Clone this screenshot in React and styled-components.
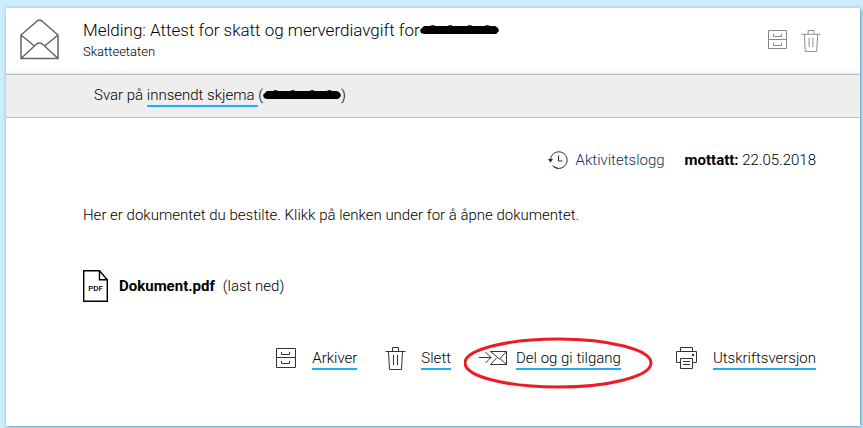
import React from "react";
import styled, { createGlobalStyle } from "styled-components";

const GlobalStyle = createGlobalStyle`
  *, *::before, *::after { box-sizing: border-box; }
  body {
    margin: 0;
    background: #cceeff;
    color: #000;
    font-family: Roboto, "Liberation Sans", sans-serif;
    font-size: 15px;
    font-weight: 300;
    line-height: 20px;
  }
  strong { font-weight: 700; }
`;

const Page = styled.main`
  padding: 8px 3px 2px 6px;
`;

const Card = styled.article`
  background: #fff;
  box-shadow: 1px 1px 4px rgba(0, 70, 100, 0.55);
`;

const Header = styled.header`
  display: flex;
  align-items: flex-start;
  height: 66px;
  padding: 11px 39px 0 14px;
  background: linear-gradient(#fff 62px, #eee 66px);
`;

const Titles = styled.div`
  flex: 1;
  margin-left: 24px;
`;

const Title = styled.h1`
  display: flex;
  align-items: center;
  margin: 0;
  font-size: 17px;
  line-height: 22px;
  font-weight: 300;
`;

const Sender = styled.p`
  margin: 2px 0 0;
  font-size: 13px;
  line-height: 18px;
`;

const HeaderTools = styled.div`
  display: flex;
  gap: 13px;
  padding-top: 10px;
`;

const IconButton = styled.button`
  display: flex;
  padding: 0;
  border: 0;
  background: none;
  color: #888;
  cursor: pointer;
`;

const Reference = styled.div`
  display: flex;
  align-items: center;
  height: 44px;
  padding: 0 88px 2px;
  border: solid #b0bec5;
  border-width: 1px 0;
  background: #eee;
`;

const TextLink = styled.a`
  margin-top: 2px;
  border-bottom: 2px solid #1eaef7;
  color: #000;
  line-height: 20px;
  text-decoration: none;
  white-space: pre;
`;

const Body = styled.div`
  padding: 32px 44px 56px 77px;
`;

const MetaRow = styled.div`
  display: flex;
  justify-content: flex-end;
  align-items: center;
  gap: 20px;
`;

const LogLink = styled.a`
  display: flex;
  align-items: center;
  gap: 8px;
  color: #0f2f50;
  text-decoration: none;
`;

const Message = styled.p`
  margin: 35px 0 0;
`;

const Download = styled.a`
  display: flex;
  align-items: center;
  gap: 8px;
  width: fit-content;
  margin-top: 45px;
  color: #000;
  text-decoration: none;
`;

const FileName = styled.strong`
  margin-left: 3px;
`;

const Actions = styled.nav`
  display: flex;
  justify-content: flex-end;
  align-items: center;
  gap: 28px;
  margin-top: 44px;
`;

const Action = styled.span`
  position: relative;
  display: flex;
  align-items: center;
  gap: ${(p) => (p.$marked ? "9px" : "15px")};
  margin-right: ${(p) => (p.$marked ? "27px" : "0")};
  color: #333;
`;

const Marker = styled.svg`
  position: absolute;
  left: -15px;
  top: -9px;
  pointer-events: none;
`;

const Icon = styled.svg`
  flex: none;
  fill: none;
  stroke: currentColor;
  stroke-width: ${(p) => p.$weight || 1};
`;

const Cabinet = ({ size = 22 }) => (
  <Icon width={size} height={size} viewBox={`0 0 ${size} ${size}`} aria-hidden="true">
    <path d={`M1.5 1.500h${size - 3}v${size - 3}h-${size - 3}zM1.500 10.500h${size - 3}`} />
    <path d="M6.500 5v2.500h8V5M6.500 14v2.500h8V14" />
  </Icon>
);

const Trash = ({ size = 24 }) => (
  <Icon width={size - 3} height={size} viewBox="0 0 21 24" aria-hidden="true">
    <path d="M.5 5.500h20M7.500 5V1.500h6V5M3.500 5.500l1 18h12l1-18M8.500 9v10M12.500 9v10" />
  </Icon>
);

const OpenEnvelope = () => (
  <Icon $weight={1.5} width="39" height="41" viewBox="0 0 39 41" color="#666" aria-hidden="true">
    <path d="M1 16v23.500h37V16L23 3q-3.500-4-7 0zM1 16l14 11.500M38 16L24 27.500M1 39.500L15.500 26q4-4 8 0L38 39.500" />
  </Icon>
);

const History = () => (
  <Icon width="20" height="20" viewBox="0 0 20 20" aria-hidden="true">
    <path d="M2.500 10a8.300 8.300 0 1 1 2 5.500M6 16.500q2 1.700 4 1.900M10.500 5.500v5.500h4" />
    <path d="M0 9h5l-2.500 3.500z" fill="currentColor" stroke="none" />
  </Icon>
);

const PdfFile = () => (
  <Icon $weight={1.4} width="25" height="32" viewBox="0 0 25 32" aria-hidden="true">
    <path d="M.7.7h15.800l7.800 9v21.600H.7zM16.500.7v9h7.800" />
    <text x="12.500" y="21" textAnchor="middle" fontSize="8" fontWeight="500" fill="currentColor" stroke="none">
      PDF
    </text>
  </Icon>
);

const Send = () => (
  <Icon width="28" height="16" viewBox="0 0 28 16" aria-hidden="true">
    <path d="M0 7.500h12M6.500 2l5.500 5.500L6.500 13M11.500 1.500h16v13h-16M11.500 1.500l9 7.500 7-7.500M17.500 8l-6 6.500M21 8.500l6.500 6" />
  </Icon>
);

const Printer = () => (
  <Icon width="22" height="22" viewBox="0 0 22 22" aria-hidden="true">
    <path d="M4.500 4.500v-4h12v4M4.500 15.500h-4v-11h20v11h-4M4.500 11.500h12v10h-12zM7 14.500h7M7 17.500h7" />
    <path d="M16 7h2v2h-2z" fill="currentColor" stroke="none" />
  </Icon>
);

const Redaction = ({ width }) => (
  <svg width={width} height="10" viewBox="0 0 81 10" preserveAspectRatio="none" role="img" aria-label="Skjult nummer">
    <path d="M0 5l4-4h6l3-1 3 1h12l3-1 3 1h14l3-1 3 1h12l3-1 3 1h5l3 2 1 3-3 3H4L1 8z" fill="#000" />
  </svg>
);

export default function App() {
  return (
    <>
      <GlobalStyle />
      <Page>
        <Card>
          <Header>
            <OpenEnvelope />
            <Titles>
              <Title>
                Melding: Attest for skatt og merverdiavgift for
                <Redaction width="79" />
              </Title>
              <Sender>Skatteetaten</Sender>
            </Titles>
            <HeaderTools>
              <IconButton type="button" aria-label="Arkiver">
                <Cabinet size={21} />
              </IconButton>
              <IconButton type="button" aria-label="Slett">
                <Trash size={23} />
              </IconButton>
            </HeaderTools>
          </Header>
          <Reference>
            <span>Svar på&nbsp;</span>
            <TextLink href="#skjema">{"innsendt skjema "}</TextLink>
            (<Redaction width="78" />)
          </Reference>
          <Body>
            <MetaRow>
              <LogLink href="#logg">
                <History />
                Aktivitetslogg
              </LogLink>
              <span>
                <strong>mottatt:</strong> 22.05.2018
              </span>
            </MetaRow>
            <Message>
              Her er dokumentet du bestilte. Klikk på lenken under for å åpne dokumentet.
            </Message>
            <Download href="#dokument">
              <PdfFile />
              <FileName>Dokument.pdf</FileName>
              <span>(last ned)</span>
            </Download>
            <Actions aria-label="Handlinger">
              <Action>
                <Cabinet />
                <TextLink href="#arkiver">Arkiver</TextLink>
              </Action>
              <Action>
                <Trash />
                <TextLink href="#slett">Slett</TextLink>
              </Action>
              <Action $marked>
                <Send />
                <TextLink href="#del">Del og gi tilgang</TextLink>
                <Marker width="189" height="52" viewBox="0 0 189 52" aria-hidden="true">
                  <ellipse cx="94" cy="26" rx="93" ry="24" fill="none" stroke="#ed1c24" strokeWidth="3" />
                </Marker>
              </Action>
              <Action>
                <Printer />
                <TextLink href="#utskrift">Utskriftsversjon</TextLink>
              </Action>
            </Actions>
          </Body>
        </Card>
      </Page>
    </>
  );
}
